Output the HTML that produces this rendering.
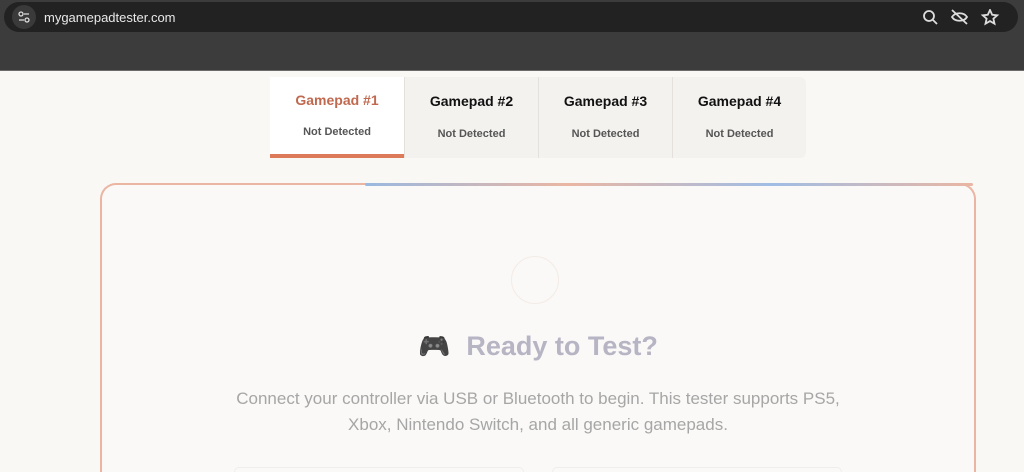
<!DOCTYPE html>
<html><head><meta charset="utf-8"><style>
*{margin:0;padding:0;box-sizing:border-box}
html,body{width:1024px;height:472px;overflow:hidden}
body{background:#faf8f5;font-family:"Liberation Sans",sans-serif;position:relative}
.top{position:absolute;left:0;top:0;width:1024px;height:71px;background:#3c3c3c;border-bottom:1px solid #6a6a6a}
.bar{position:absolute;left:4px;top:2px;width:1014px;height:30px;border-radius:15px;background:#222}
.ic{position:absolute;left:8px;top:3px;width:24px;height:24px;border-radius:12px;background:#3a3a3a}
.url{position:absolute;left:40px;top:8px;color:#e8e8e8;font-size:13px}
.tabs{position:absolute;left:270px;top:77px;width:536px;height:81px;background:#f4f2ef;border-radius:6px}
.tab{position:absolute;top:0;width:134px;height:81px;text-align:center}
.tab b{display:block;margin-top:16px;font-size:14px;color:#111}
.tab span{display:block;margin-top:19px;font-size:11px;color:#555;font-weight:bold}
.t1{left:0;background:#fff;border-bottom:4px solid #dc7a5a}
.t1 b{color:#c0694f;font-weight:bold;margin-top:15px}
.t1 span{margin-top:18px}
.sep{border-left:1px solid #e4e1dc}
.card{position:absolute;left:100px;top:183px;width:876px;height:289px;border:2px solid #eab6a3;border-bottom:none;border-radius:16px 16px 0 0;background:#faf9f7}
.grad{position:absolute;left:365px;top:183px;width:608px;height:3px;background:linear-gradient(90deg,#9ab8e0,#eab6a3,#a0bde5,#eab6a3);border-radius:2px}
.circ{position:absolute;left:511px;top:256px;width:48px;height:48px;border-radius:50%;border:1px solid #f3ebe6}
.h{position:absolute;left:418px;white-space:nowrap;top:331px;font-size:27px;font-weight:bold;color:#b7b4c4}
.h i{font-style:normal;margin-right:16px;font-size:26px;filter:grayscale(1) brightness(.7)}
.p{position:absolute;left:208px;width:660px;top:386px;text-align:center;font-size:17px;line-height:26px;color:#a6a6a6}
.btn{position:absolute;top:467px;width:290px;height:5px;border:1px solid #eee;border-bottom:none;border-radius:8px 8px 0 0}
</style></head><body>
<div class="top"><div class="bar"><div class="ic">
<svg width="24" height="24" fill="none" stroke="#ddd" stroke-width="1.3"><circle cx="9" cy="9" r="2"/><path d="M12 9h5M7 15h5"/><circle cx="15" cy="15" r="2"/></svg>
</div><div class="url">mygamepadtester.com</div>
<svg style="position:absolute;left:918px;top:7px" width="80" height="17" fill="none" stroke="#ddd" stroke-width="1.8">
<circle cx="7" cy="7" r="5"/><path d="M11 11l4 4"/>
<path d="M30 8c3-5 12-5 15 0c-3 5-12 5-15 0z"/><path d="M30 1l15 14"/>
<path d="M68 1l2.2 4.8 5 .5-3.8 3.4 1.1 5-4.5-2.6-4.5 2.6 1.1-5-3.8-3.4 5-.5z"/></svg>
</div></div>
<div class="tabs">
<div class="tab t1"><b>Gamepad #1</b><span>Not Detected</span></div>
<div class="tab sep" style="left:134px"><b>Gamepad #2</b><span>Not Detected</span></div>
<div class="tab sep" style="left:268px"><b>Gamepad #3</b><span>Not Detected</span></div>
<div class="tab sep" style="left:402px"><b>Gamepad #4</b><span>Not Detected</span></div>
</div>
<div class="card"></div><div class="grad"></div>
<div class="circ"></div>
<div class="h"><i>🎮</i>Ready to Test?</div>
<div class="p">Connect your controller via USB or Bluetooth to begin. This tester supports PS5,<br>Xbox, Nintendo Switch, and all generic gamepads.</div>
<div class="btn" style="left:234px"></div><div class="btn" style="left:552px"></div>
</body></html>
